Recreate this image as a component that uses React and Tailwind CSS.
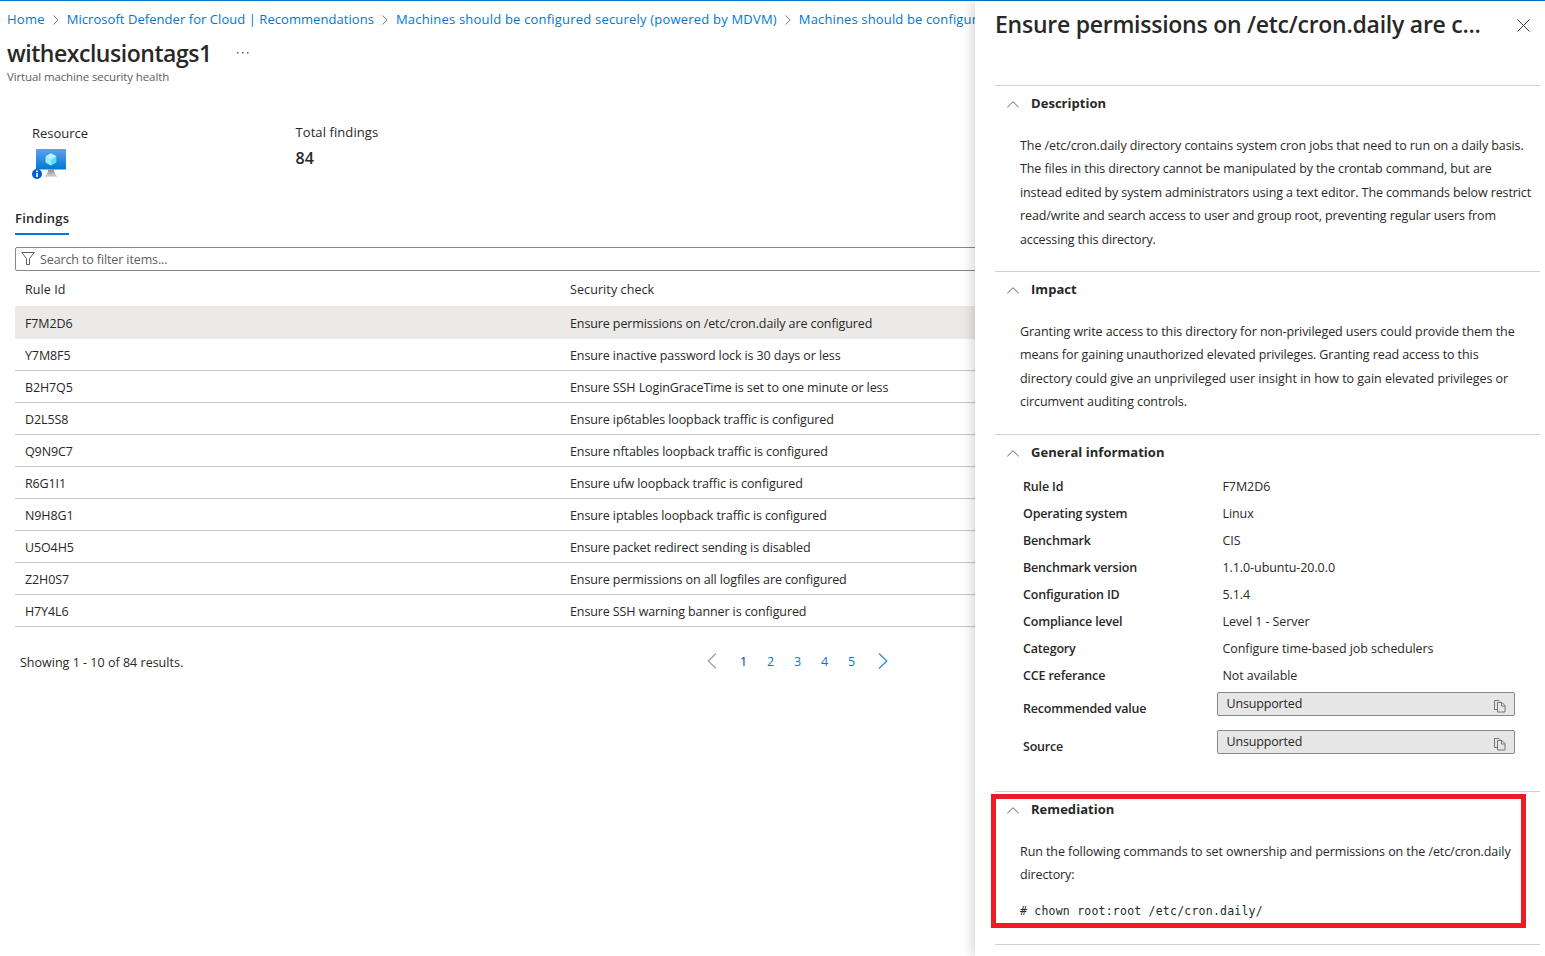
import React from "react";

const findings = [
  ["F7M2D6", "Ensure permissions on /etc/cron.daily are configured"],
  ["Y7M8F5", "Ensure inactive password lock is 30 days or less"],
  ["B2H7Q5", "Ensure SSH LoginGraceTime is set to one minute or less"],
  ["D2L5S8", "Ensure ip6tables loopback traffic is configured"],
  ["Q9N9C7", "Ensure nftables loopback traffic is configured"],
  ["R6G1I1", "Ensure ufw loopback traffic is configured"],
  ["N9H8G1", "Ensure iptables loopback traffic is configured"],
  ["U5O4H5", "Ensure packet redirect sending is disabled"],
  ["Z2H0S7", "Ensure permissions on all logfiles are configured"],
  ["H7Y4L6", "Ensure SSH warning banner is configured"],
];

const general = [
  ["Rule Id", "F7M2D6"],
  ["Operating system", "Linux"],
  ["Benchmark", "CIS"],
  ["Benchmark version", "1.1.0-ubuntu-20.0.0"],
  ["Configuration ID", "5.1.4"],
  ["Compliance level", "Level 1 - Server"],
  ["Category", "Configure time-based job schedulers"],
  ["CCE referance", "Not available"],
];

function Crumb({ className = "", children }) {
  return <a className={"text-[#0078d4] whitespace-nowrap " + className}>{children}</a>;
}

function CrumbSep() {
  return (
    <svg className="w-[6px] h-[10px] mx-2 mt-px shrink-0" viewBox="0 0 6 10" fill="none" stroke="#7a7876" strokeWidth="1">
      <path d="M0.5 0.5 5.2 5 0.5 9.5" />
    </svg>
  );
}

function VmIcon() {
  return (
    <svg className="w-[35px] h-[31px]" viewBox="0 0 35 31">
      <defs>
        <linearGradient id="screen" x1="0" y1="0" x2="0" y2="1">
          <stop offset="0" stopColor="#5ea0ef" />
          <stop offset="1" stopColor="#0078d4" />
        </linearGradient>
        <linearGradient id="stand" x1="0" y1="0" x2="0" y2="1">
          <stop offset="0" stopColor="#8f8f8f" />
          <stop offset="1" stopColor="#d2d2d2" />
        </linearGradient>
      </defs>
      <rect x="4" y="0" width="30" height="20.5" rx="0.8" fill="url(#screen)" />
      <path d="M16 20.5h6c0 4 1.5 5.5 4.3 7.3H11.8c2.8-1.8 4.2-3.3 4.2-7.3z" fill="url(#stand)" />
      <path d="M19 4.2 24.3 7.2v6.2L19 16.5l-5.3-3.1V7.2z" fill="#50e6ff" />
      <path d="M19 4.2 24.3 7.2 19 10.4l-5.3-3.2z" fill="#c3f1ff" />
      <path d="M13.7 7.2 19 10.4v6.1l-5.3-3.1z" fill="#9cebff" />
      <circle cx="5" cy="25" r="5" fill="#015cda" />
      <rect x="4.2" y="24" width="1.7" height="4" fill="#fff" />
      <rect x="4.2" y="21.5" width="1.7" height="1.7" fill="#fff" />
    </svg>
  );
}

function CopyIcon() {
  return (
    <svg className="w-[12px] h-[13px]" viewBox="0 0 12 13" fill="none" stroke="#797775" strokeWidth="1">
      <path d="M3.5 9.5H0.5V0.5H5L6 1.5" />
      <path d="M3.5 2.5h4.5l3 3v6.5h-7.5z" />
      <path d="M7.5 2.5v3.5h3.5" />
    </svg>
  );
}

function Section({ title, className, children }) {
  return (
    <section className={"border-t border-[#d2d0ce] shrink-0 " + className}>
      <div className="flex items-center h-[36px] pl-[12px]">
        <svg className="w-[12px] h-[7px]" viewBox="0 0 12 7" fill="none" stroke="#605e5c" strokeWidth="1">
          <path d="M0.3 6.3 6 0.7 11.7 6.3" />
        </svg>
        <h3 className="-mt-[2px] ml-[12px] font-bold text-[13px] tracking-[0.04px] leading-[18px]">{title}</h3>
      </div>
      {children}
    </section>
  );
}

// Each line is a [text, tracking class] pair.
function Paragraph({ lines }) {
  return (
    <p className="pl-[25px] pt-[12px] leading-[23.4px]">
      {lines.map(([line, tracking]) => (
        <span key={line} className={"block whitespace-nowrap " + tracking}>{line}</span>
      ))}
    </p>
  );
}

function CopyField({ label, value }) {
  return (
    <div className="flex h-[38px] pl-[28px]">
      <div className="w-[194px] font-semibold leading-[40px] tracking-[-0.19px]">{label}</div>
      <div className="mt-[3px] flex w-[298px] h-[24px] justify-between rounded-[2px] border border-[#8a8886] bg-[#e6e6e6] pl-[8.5px] pr-[8px]">
        <span className="leading-[21px] tracking-[-0.16px]">{value}</span>
        <span className="pt-[7px]"><CopyIcon /></span>
      </div>
    </div>
  );
}

export default function App() {
  return (
    <div className="flex h-[956px] w-[1545px] flex-col overflow-hidden bg-white font-['Open_Sans','Noto_Sans',sans-serif] text-[12.5px] tracking-[-0.12px] text-[#292827]">
      <div className="h-px shrink-0 bg-[#0078d4]" />
      <div className="flex min-h-0 flex-1">
        <main className="w-[975px] shrink-0 overflow-hidden">
          <nav className="flex h-[37px] items-center pl-[7px] text-[13px]">
            <Crumb className="tracking-[0.25px]">Home</Crumb>
            <CrumbSep />
            <Crumb className="tracking-[0.05px]">Microsoft Defender for Cloud | Recommendations</Crumb>
            <CrumbSep />
            <Crumb className="tracking-[0.2px]">Machines should be configured securely (powered by MDVM)</Crumb>
            <CrumbSep />
            <Crumb className="min-w-0 flex-1 overflow-hidden tracking-[0.14px]">Machines should be configur</Crumb>
          </nav>
          <div className="flex h-[30px] items-center pl-[7px]">
            <h1 className="-mt-px text-[23px] font-semibold leading-[30px] tracking-[-0.47px]">withexclusiontags1</h1>
            <svg className="ml-[25px] h-[2px] w-[12px]" viewBox="0 0 12 2" fill="#605e5c">
              <rect x="0" y="0" width="1.5" height="1.5" />
              <rect x="5" y="0" width="1.5" height="1.5" />
              <rect x="10" y="0" width="1.5" height="1.5" />
            </svg>
          </div>
          <div className="h-[18px] pl-[7px] text-[11.5px] leading-[18px] text-[#605e5c]">Virtual machine security health</div>

          <div className="flex h-[118px] pl-[32px] pt-[37px] text-[13px] tracking-[0px]">
            <div className="w-[263.5px]">
              <div className="leading-[20px]">Resource</div>
              <div className="pt-[6px]"><VmIcon /></div>
            </div>
            <div>
              <div className="leading-[18px] tracking-[0.08px]">Total findings</div>
              <div className="pt-[4px] text-[16px] font-semibold leading-[26px]">84</div>
            </div>
          </div>

          <div className="h-[43px] pl-[15px]">
            <div className="inline-block h-[31px] w-[54px] border-b-2 border-[#0078d4] text-[13px] font-semibold leading-[28px] tracking-[0.26px]">Findings</div>
          </div>

          <div className="ml-[15px] flex h-[24px] w-[980px] items-center rounded-[2px] border border-[#8a8886] pl-[5px] text-[#605e5c]">
            <svg className="-mt-[2px] h-[13px] w-[14px]" viewBox="0 0 14 13" fill="none" stroke="#605e5c" strokeWidth="1">
              <path d="M0.7 0.5h12.6L8.5 6.5v6h-3v-6z" />
            </svg>
            <span className="ml-[5px] pt-[2px]">Search to filter items...</span>
          </div>

          <div className="ml-[15px]">
            <div className="flex h-[35px] items-center pl-[10px] pt-[3px] font-medium tracking-[0.09px]">
              <div className="w-[545px]">Rule Id</div>
              <div>Security check</div>
            </div>
            {findings.map(([id, check], i) => (
              <div
                key={id}
                className={
                  i === 0
                    ? "flex h-[33px] items-center bg-[#ebeae9] pl-[10px] pt-[3px]"
                    : "flex h-[32px] items-center border-b border-[#c8c6c4] pl-[10px] pt-[3px]"
                }
              >
                <div className="w-[545px]">{id}</div>
                <div className="tracking-[-0.105px]">{check}</div>
              </div>
            ))}
          </div>

          <div className="flex h-[70px] items-center pl-[20px]">
            <div className="w-[687px] pt-[3px] tracking-[0.01px]">Showing 1 - 10 of 84 results.</div>
            <svg className="-mt-[2px] h-[16px] w-[10px]" viewBox="0 0 10 16" fill="none" stroke="#a19f9d" strokeWidth="1.2">
              <path d="M9 0.5 1.2 8 9 15.5" />
            </svg>
            <div className="ml-[13px] flex text-[#0078d4]">
              <span className="w-[27px] text-center text-[#003a6c]">1</span>
              <span className="w-[27px] text-center">2</span>
              <span className="w-[27px] text-center">3</span>
              <span className="w-[27px] text-center">4</span>
              <span className="w-[27px] text-center">5</span>
            </div>
            <svg className="-mt-[2px] ml-[13px] h-[16px] w-[10px]" viewBox="0 0 10 16" fill="none" stroke="#2b8fdc" strokeWidth="1.3">
              <path d="M1 0.5 8.8 8 1 15.5" />
            </svg>
          </div>
        </main>

        <aside className="relative flex w-[570px] shrink-0 flex-col bg-white pl-[20px] pr-[5px] shadow-[0_0_14px_rgba(0,0,0,0.24)]">
          <header className="flex h-[84px] shrink-0 items-start">
            <h2 className="w-[500px] whitespace-nowrap pt-[7px] text-[23px] font-semibold leading-[32px] tracking-[-0.25px]">
              Ensure permissions on /etc/cron.daily are c...
            </h2>
            <svg className="ml-[22px] mt-[18px] h-[13px] w-[13px]" viewBox="0 0 13 13" fill="none" stroke="#3b3a39" strokeWidth="1">
              <path d="M0.5 0.5 12.5 12.5M12.5 0.5 0.5 12.5" />
            </svg>
          </header>

          <Section title="Description" className="h-[186px]">
            <Paragraph
              lines={[
                ["The /etc/cron.daily directory contains system cron jobs that need to run on a daily basis.", "tracking-[-0.085px]"],
                ["The files in this directory cannot be manipulated by the crontab command, but are", "tracking-[-0.1px]"],
                ["instead edited by system administrators using a text editor. The commands below restrict", "tracking-[-0.115px]"],
                ["read/write and search access to user and group root, preventing regular users from", "tracking-[-0.12px]"],
                ["accessing this directory.", "tracking-[-0.12px]"],
              ]}
            />
          </Section>

          <Section title="Impact" className="h-[163px]">
            <Paragraph
              lines={[
                ["Granting write access to this directory for non-privileged users could provide them the", "tracking-[-0.075px]"],
                ["means for gaining unauthorized elevated privileges. Granting read access to this", "tracking-[-0.09px]"],
                ["directory could give an unprivileged user insight in how to gain elevated privileges or", "tracking-[-0.03px]"],
                ["circumvent auditing controls.", "tracking-[-0.09px]"],
              ]}
            />
          </Section>

          <Section title="General information" className="h-[357px]">
            <div className="pt-[2px]">
              {general.map(([label, value]) => (
                <div key={label} className="flex h-[27px] items-center pl-[28px] pt-[2px]">
                  <div className="w-[199.5px] font-semibold tracking-[-0.17px]">{label}</div>
                  <div className="tracking-[-0.08px]">{value}</div>
                </div>
              ))}
              <CopyField label="Recommended value" value="Unsupported" />
              <CopyField label="Source" value="Unsupported" />
            </div>
          </Section>

          <Section title="Remediation" className="h-[153px]">
            <Paragraph
              lines={[
                ["Run the following commands to set ownership and permissions on the /etc/cron.daily", "tracking-[-0.08px]"],
                ["directory:", "tracking-[-0.12px]"],
              ]}
            />
            <code className="block pl-[25px] pt-[13px] font-['DejaVu_Sans_Mono',monospace] text-[11.5px] leading-[23px] tracking-[0.22px]">
              # chown root:root /etc/cron.daily/
            </code>
          </Section>
          <div className="h-px shrink-0 bg-[#d2d0ce]" />

          <div className="pointer-events-none absolute left-[16px] top-[793px] h-[134px] w-[535px] border-[5px] border-[#ed1c24]" />
        </aside>
      </div>
    </div>
  );
}
